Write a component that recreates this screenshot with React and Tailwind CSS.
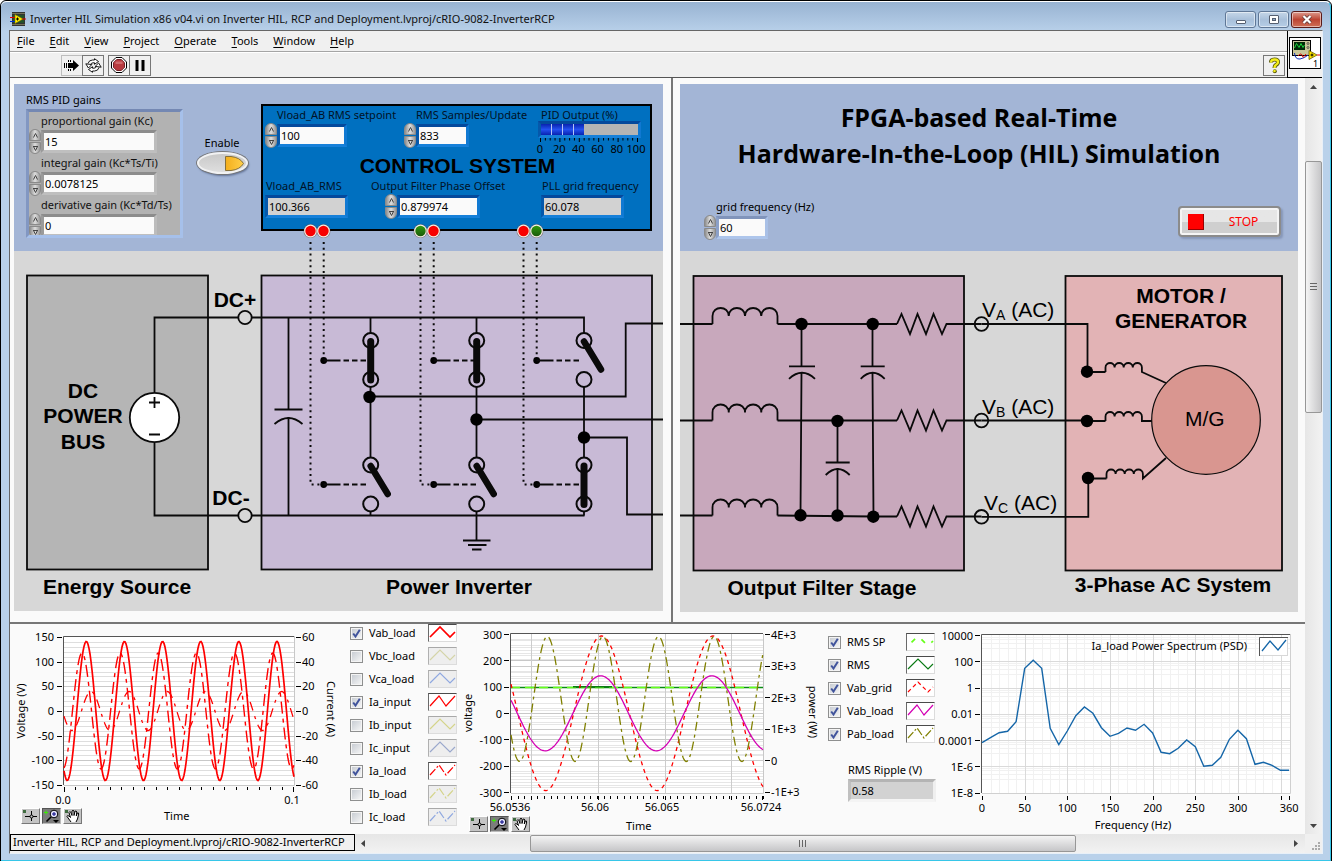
import React from "react";

const UI = "font-['Noto_Sans','Open_Sans','Segoe_UI',sans-serif]";
const ARIAL = "Liberation Sans, Arial, sans-serif";
const RED = "#ff0000";

/* ---------- small helpers ---------- */

const wave = (x0, x1, mid, amp, peak, period) => {
  const pts = [];
  for (let x = x0; x <= x1; x += 1) {
    const y = mid - amp * Math.cos((2 * Math.PI * (x - peak)) / period);
    pts.push(`${x},${y.toFixed(1)}`);
  }
  return pts.join(" ");
};

const steps = (from, to, step) => {
  const out = [];
  for (let v = from; v <= to + 0.01; v += step) out.push(v);
  return out;
};

/* ---------- controls ---------- */

const BEVEL = {
  gray: "border-t-[#8c8c8c] border-l-[#9a9a9a] border-r-[#bcbcbc] border-b-[#bfbfbf]",
  blue: "border-t-[#04499c] border-l-[#0558ab] border-r-[#1079d2] border-b-[#1680d9]",
  sky: "border-t-[#8094bb] border-l-[#8ba0c8] border-r-[#a9c0e6] border-b-[#adc5eb]",
  plain: "border-t-[#b4b4b4] border-l-[#c0c0c0] border-r-[#efefef] border-b-[#f4f4f4]",
};

function Spinner({ name }) {
  const half =
    "flex h-3 w-3 items-center justify-center border border-[#8a8a8a] bg-gradient-to-r from-[#8f8f8f] via-[#dedede] to-[#999999]";
  return (
    <span className="flex flex-col gap-px">
      <button type="button" aria-label={`Increase ${name}`} className={`${half} rounded-t-[6px]`}>
        <svg width="5" height="5" viewBox="0 0 5 5">
          <path d="M0.5 4.5 L2.5 0.5 L4.5 4.5" fill="none" stroke="#444" />
        </svg>
      </button>
      <button type="button" aria-label={`Decrease ${name}`} className={`${half} rounded-b-[6px]`}>
        <svg width="5" height="5" viewBox="0 0 5 5">
          <path d="M0 0.5 H5 M0.5 0.5 L2.5 4.5 L4.5 0.5" fill="none" stroke="#444" />
        </svg>
      </button>
    </span>
  );
}

function Numeric({ id, label, value, width, bevel, spinner = true, readOnly = false, indent = "", labelIndent = "" }) {
  return (
    <div className="flex flex-col">
      <label htmlFor={id} className={`h-[18px] whitespace-nowrap leading-[18px] ${labelIndent}`}>
        {label}
      </label>
      <div className={`flex h-[23px] items-center ${indent}`}>
        {spinner && <Spinner name={label} />}
        <input
          id={id}
          type="text"
          defaultValue={value}
          readOnly={readOnly}
          className={`h-[23px] border-[3px] px-px text-[11px] text-black outline-none ${width} ${BEVEL[bevel]} ${
            readOnly ? "bg-[#d2d2d2]" : "bg-[#fafafa]"
          }`}
        />
      </div>
    </div>
  );
}

function Check({ id, checked }) {
  return (
    <span className="relative flex size-[13px]">
      <input
        id={id}
        type="checkbox"
        defaultChecked={checked}
        className="peer size-[13px] appearance-none border border-[#8e8f8f] bg-gradient-to-br from-[#c4c9d0] to-[#f8f8f8] shadow-[inset_0_0_0_1px_#f4f4f4]"
      />
      <svg viewBox="0 0 13 13" className="pointer-events-none absolute inset-0 hidden peer-checked:block">
        <path d="M3.2 6.5 L5.5 9.6 L9.8 2.8" fill="none" stroke="#41549c" strokeWidth="2" />
      </svg>
    </span>
  );
}

const SHAPES = {
  peak: "2,13 12,3 22,13 27,8",
  zig: "2,13 11,3 18,13 27,3",
};

function Sample({ color, shape, dash, off, strong }) {
  return (
    <svg
      width="29"
      height="18"
      viewBox="1 1 27 16"
      className={`border border-r-[#dcdcdc] border-b-[#dcdcdc] ${
        off ? "border-t-[#a8a8a8] border-l-[#b0b0b0] bg-[#eeeeee]" : "border-t-[#4a4a4a] border-l-[#6a6a6a] bg-white"
      }`}
    >
      <polyline
        points={SHAPES[shape]}
        fill="none"
        stroke={color}
        strokeWidth={strong ? 1.7 : 1.2}
        strokeDasharray={dash}
      />
    </svg>
  );
}

function Legend({ prefix, items }) {
  return (
    <ul className="flex flex-col gap-[5px]">
      {items.map((it) => (
        <li key={it.name} className="flex h-[18px] items-center">
          <Check id={`${prefix}-${it.name}`} checked={!it.off} />
          <label htmlFor={`${prefix}-${it.name}`} className="w-[65px] pl-1.5 whitespace-nowrap">
            {it.name}
          </label>
          <Sample {...it} />
        </li>
      ))}
    </ul>
  );
}

function Palette() {
  const btn = "flex h-4 w-[19px] items-center justify-center border border-t-white border-l-white border-r-[#777] border-b-[#777] bg-[#c4c4c4]";
  return (
    <div className="flex gap-0.5">
      <button type="button" aria-label="Cursor" className={btn}>
        <svg width="17" height="14" viewBox="0 0 17 14">
          <rect x="1" y="1" width="3" height="3" fill="#3f6b3f" />
          <path d="M9.5 2 V12 M3 7.5 H15" stroke="#000" fill="none" />
          <circle cx="9.5" cy="7.5" r="1.5" fill="#ccc" stroke="#000" />
        </svg>
      </button>
      <button type="button" aria-label="Zoom" className="flex h-4 w-[19px] items-center justify-center border border-t-[#555] border-l-[#555] border-r-[#bbb] border-b-[#bbb] bg-[#7c7c7c]">
        <svg width="17" height="14" viewBox="0 0 17 14">
          <path d="M1 3.5 H5 M3 1.5 V5.5" stroke="#39f000" />
          <circle cx="11" cy="5" r="3.8" fill="#e8e8ff" stroke="#000" />
          <path d="M9 5 H13 M11 3 V7" stroke="#000080" />
          <path d="M8 8 L3.5 12.5" stroke="#000" strokeWidth="1.6" />
          <path d="M10 11 H16 L13 14 Z" fill="#000" />
        </svg>
      </button>
      <button type="button" aria-label="Pan" className={btn}>
        <svg width="17" height="14" viewBox="0 0 17 14">
          <rect x="1" y="1" width="3" height="3" fill="#3f6b3f" />
          <path
            d="M7 13 L3 7.5 Q3 6 5 7 L6.5 8.5 L5 3.5 Q5.5 2 6.8 3.3 L8 6.5 V2 Q9 0.5 10 2 V6.5 L11 2.3 Q12.2 1.3 12.8 3 L12.3 7 L13.3 4 Q14.6 3.3 14.7 5 L13.5 10 L12 13"
            fill="#fff"
            stroke="#000"
          />
        </svg>
      </button>
    </div>
  );
}

/* ---------- window chrome ---------- */

function TitleBar() {
  const btn = "flex h-[17px] w-[31px] items-center justify-center rounded-[3px] border shadow-[inset_0_0_0_1px_rgba(255,255,255,0.5)]";
  return (
    <header className="flex h-7 items-center pt-1.5 pr-px pl-px">
      <svg width="16" height="14" viewBox="0 0 16 14">
        <rect x="2" y="0" width="13" height="14" fill="#333" />
        <path d="M2.5 1.5 H15 M2.5 12.5 H15" stroke="#b4b478" strokeDasharray="1 1" />
        <rect x="3" y="3" width="11" height="8" fill="#22502a" />
        <path d="M5 2.5 L13 7 L5 11.5 Z" fill="#ffee00" stroke="#8a7a00" strokeWidth="0.6" />
        <path d="M6 7 H9 M7.5 5.5 V8.5" stroke="#000" />
        <path d="M0 5.5 H5" stroke="#e00000" />
        <path d="M0 9.5 H5" stroke="#0030d0" />
        <path d="M12 7 H16" stroke="#e00000" />
      </svg>
      <h1 className="flex-1 truncate pl-1 text-[#111]">
        Inverter HIL Simulation x86 v04.vi on Inverter HIL, RCP and Deployment.lvproj/cRIO-9082-InverterRCP
      </h1>
      <div className="flex gap-0.5">
        <button type="button" aria-label="Minimize" className={`${btn} border-[#5f7796] bg-gradient-to-b from-[#c5d6e8] via-[#a9c0da] to-[#b5cde6]`}>
          <svg width="12" height="11" viewBox="0 0 12 11">
            <rect x="1.5" y="6.5" width="9" height="3" rx="0.5" fill="#fff" stroke="#555f70" />
          </svg>
        </button>
        <button type="button" aria-label="Restore" className={`${btn} border-[#5f7796] bg-gradient-to-b from-[#c5d6e8] via-[#a9c0da] to-[#b5cde6]`}>
          <svg width="12" height="11" viewBox="0 0 12 11">
            <rect x="1.5" y="1.5" width="9" height="8" rx="0.5" fill="#fff" stroke="#555f70" />
            <rect x="4.5" y="4.5" width="3" height="2" fill="#8fa9c8" stroke="#555f70" />
          </svg>
        </button>
        <button type="button" aria-label="Close" className={`${btn} border-[#5a1a18] bg-gradient-to-b from-[#dc9a8e] via-[#bc4433] to-[#cf6f57]`}>
          <svg width="12" height="11" viewBox="0 0 12 11">
            <path d="M2.5 2 L9.5 9 M9.5 2 L2.5 9" stroke="#5b3a3a" strokeWidth="3.8" />
            <path d="M2.5 2 L9.5 9 M9.5 2 L2.5 9" stroke="#fff" strokeWidth="2.2" />
          </svg>
        </button>
      </div>
    </header>
  );
}

function MenuBar() {
  return (
    <nav className="flex h-[21px] items-center gap-[15px] border-b border-[#a5a5a5] bg-[#f0f0f0] pl-[7px]">
      {["File", "Edit", "View", "Project", "Operate", "Tools", "Window", "Help"].map((m) => (
        <button key={m} type="button" className="leading-4">
          <span className="underline underline-offset-2">{m[0]}</span>
          {m.slice(1)}
        </button>
      ))}
    </nav>
  );
}

function ToolBar() {
  const btn = "flex h-[21px] w-[22px] items-center justify-center border bg-[#f0f0f0]";
  return (
    <div className="flex h-[26px] items-center border-t border-t-white border-b border-b-[#555] bg-[#f0f0f0] pr-0.5 pl-[51px]">
      <button type="button" aria-label="Run" className={`${btn} border-[#bdbdbd]`}>
        <svg width="16" height="15" viewBox="0 0 16 15">
          <path d="M0.5 5 V10 M2.5 5 V10" stroke="#000" />
          <path d="M4 5 H9 V2 L15 7.5 L9 13 V10 H4 Z" fill="#000" />
          <path d="M4.5 2 V4 M6.5 2 V4 M4.5 11 V13 M6.5 11 V13" stroke="#000" />
        </svg>
      </button>
      <button type="button" aria-label="Run continuously" className={`${btn} -ml-px border-[#777]`}>
        <svg width="17" height="15" viewBox="0 0 17 15">
          <g fill="#fff" stroke="#000" strokeWidth="0.9">
            <path d="M3 5.5 Q4 2 7.5 2 H9.5 V0.7 L13.5 3.5 L9.5 6.3 V4.8 H8 Q6 4.8 5.5 7" />
            <path d="M14 9.5 Q13 13 9.5 13 H7.5 V14.3 L3.5 11.5 L7.5 8.7 V10.2 H9 Q11 10.2 11.5 8" />
            <path d="M0.8 5.8 L6.8 6.6 L3.4 10 Z" />
            <path d="M16.2 9.2 L10.2 8.4 L13.6 5 Z" />
          </g>
        </svg>
      </button>
      <button type="button" aria-label="Abort execution" className={`${btn} ml-1 border-[#777]`}>
        <svg width="16" height="16" viewBox="0 0 16 16">
          <path d="M5 0.5 H11 L15.5 5 V11 L11 15.5 H5 L0.5 11 V5 Z" fill="#fff" stroke="#000" />
          <path d="M5.7 2.5 H10.3 L13.5 5.7 V10.3 L10.3 13.5 H5.7 L2.5 10.3 V5.7 Z" fill="#b83a3f" stroke="#74252a" />
          <path d="M4.5 4.5 H11.5 V7 H4.5 Z" fill="#cf6a6c" />
        </svg>
      </button>
      <button type="button" aria-label="Pause" className={`${btn} -ml-px border-[#777]`}>
        <svg width="10" height="11" viewBox="0 0 10 11">
          <path d="M0.5 0 H3.5 V11 H0.5 Z M6.5 0 H9.5 V11 H6.5 Z" fill="#000" />
        </svg>
      </button>
      <button type="button" aria-label="Context help" className={`${btn} ml-auto border-[#777]`}>
        <svg width="13" height="17" viewBox="0 0 13 17">
          <path d="M3 5.5 Q3 2.5 6.5 2.5 Q10 2.5 10 5 Q10 7 7.8 8 Q6.5 8.8 6.5 11" fill="none" stroke="#55560a" strokeWidth="4" />
          <circle cx="6.8" cy="14.2" r="2" fill="#55560a" />
          <path d="M3 5.5 Q3 2.5 6.5 2.5 Q10 2.5 10 5 Q10 7 7.8 8 Q6.5 8.8 6.5 11" fill="none" stroke="#f4ee1a" strokeWidth="2.4" />
          <circle cx="6.5" cy="14" r="1.3" fill="#f4ee1a" />
        </svg>
      </button>
    </div>
  );
}

function ViIcon() {
  return (
    <div className="w-[35px] border-b border-l border-black bg-[#f0f0f0] pt-1.5 pl-px">
      <svg width="32" height="32" viewBox="0 0 32 32">
        <rect x="0.5" y="0.5" width="31" height="31" fill="#fff" stroke="#000" />
        <rect x="3.5" y="3.5" width="18" height="15" fill="#c9c69a" stroke="#000" />
        <rect x="5" y="5" width="11" height="8" fill="#022a08" />
        <path d="M5.5 11 L7.5 6.5 L10 10.5 L12 6.5 L14 10.5 L15.5 8" fill="none" stroke="#1bd13a" />
        <circle cx="19" cy="6.5" r="1" fill="none" stroke="#333" strokeWidth="0.7" />
        <circle cx="19" cy="10.5" r="1" fill="none" stroke="#333" strokeWidth="0.7" />
        <path d="M5.5 16 Q6 22.5 11 22 Q16 21 19 18" fill="none" stroke="#1030c0" />
        <path d="M9 19 Q12 15 13.5 19 Q14 22 17 17" fill="none" stroke="#e00000" />
        <path d="M20 13.5 L28 18 L20 22.5 Z" fill="#ffe800" stroke="#6a5a00" strokeWidth="0.8" />
        <path d="M21.5 18 H24.5 M23 16.5 V19.5" stroke="#000" />
        <path d="M28 18 H31" stroke="#e00000" />
        <text x="24" y="30" fontSize="9" fill="#000">1</text>
      </svg>
    </div>
  );
}

/* ---------- schematic pieces ---------- */

const INK = "#0a0a0a";
const Node = ({ x, y, r = 6.2 }) => <circle cx={x} cy={y} r={r} fill="#000" stroke="none" />;
const Terminal = ({ x, y, fill = "#d7d7d7" }) => <circle cx={x} cy={y} r="6.7" fill={fill} strokeWidth="1.8" />;

const Cap = ({ x, y, half, gap = 6 }) => (
  <path d={`M${x - half} ${y} H${x + half} M${x - half} ${y + gap + 6.5} Q${x} ${y + gap - 5.5} ${x + half} ${y + gap + 6.5}`} />
);

const coil = (x, y, w, h, lead) => {
  let d = `M${x} ${y} v${-lead}`;
  for (let i = 0; i < 4; i += 1) d += ` c0 ${-h * 1.33} ${w} ${-h * 1.33} ${w} 0`;
  return `${d} v${lead}`;
};

const zigzag = (x, y) =>
  `M${x} ${y} l4.5 -10 l8.5 20 l7.5 -20 l8.5 20 l7.5 -20 l8.5 20 l4.5 -10`;

function Switch({ x, y, closed }) {
  return (
    <g>
      <circle cx={x} cy={y} r="7.5" fill="none" strokeWidth="2" />
      <circle cx={x} cy={y + 39} r="7.5" fill="none" strokeWidth="2" />
      {closed ? (
        <path d={`M${x} ${y + 1} V${y + 39.5}`} strokeWidth="7" strokeLinecap="round" />
      ) : (
        <path d={`M${x} ${y + 1} L${x + 17} ${y + 29}`} strokeWidth="6.5" strokeLinecap="round" />
      )}
    </g>
  );
}

function Led({ x, on }) {
  return (
    <g stroke="none">
      <circle cx={x} cy="231" r="7" fill="#6f4a3a" opacity="0.55" />
      <circle cx={x} cy="231" r="6.4" fill="#f4efe6" />
      <circle cx={x} cy="231" r="5.2" fill={on ? "url(#ledGreen)" : "#f80000"} />
    </g>
  );
}

function GateDrive({ x, onA, onB }) {
  return (
    <g>
      <g strokeDasharray="2 3.8" strokeWidth="2">
        <path d={`M${x} 242 V484.5 H${x + 12}`} />
        <path d={`M${x + 13.2} 242 V358`} />
      </g>
      <Node x={x + 13.2} y={360.5} r={3.4} />
      <Node x={x + 13.2} y={484.5} r={3.4} />
      <path d={`M${x + 13} 360.5 H${x + 30} M${x + 13} 484.5 H${x + 30}`} />
      <path d={`M${x + 33} 360.5 h24 M${x + 33} 484.5 h24`} strokeDasharray="5.5 3" strokeWidth="1.8" />
      <Led x={x} on={onA} />
      <Led x={x + 13} on={onB} />
    </g>
  );
}

function InverterSchematic() {
  return (
    <svg width="649" height="360" viewBox="14 251 649 360" className="relative block overflow-visible" fill="none" stroke={INK} strokeWidth="1.8">
      <defs>
        <linearGradient id="ledGreen" x1="0" y1="0" x2="0" y2="1">
          <stop offset="0" stopColor="#2f9a10" />
          <stop offset="1" stopColor="#1c5a0a" />
        </linearGradient>
      </defs>
      <rect x="27" y="275.5" width="181" height="294" fill="#b5b5b5" />
      <rect x="261.5" y="275.5" width="390.5" height="294" fill="#c8bad6" />

      <path d="M154.5 392 V317.5 H584 V334 M154.5 443 V515.5 H584.5" />
      <circle cx="154.5" cy="417.5" r="24.7" fill="#fff" strokeWidth="1.8" />
      <path d="M149 402.5 H160 M154.5 397 V408 M149 434.5 H160" />
      <Terminal x={245} y={317.5} />
      <Terminal x={245} y={515.5} />

      <path d="M288.5 317.5 V409.5 M288.5 417 V515.5" />
      <Cap x={288.5} y={409.5} half={14} gap={8} />

      <path d="M370.5 317.5 V333 M370.5 387 V457 M370.5 511 V515.5" />
      <path d="M476.5 317.5 V333 M476.5 387 V457 M476.5 511 V540.5" />
      <path d="M584 387 V457 M584 511 V515.5" />
      <path d="M463 540.5 H490.5 M468 545 H486.5 M472 549.5 H481.5" />

      <path d="M370 396.5 H625.7 V323.5 H663 M476.5 419.5 H663 M584 437.5 H627 V514.5 H663" />
      <Node x={369.5} y={397} />
      <Node x={476.5} y={419.5} />
      <Node x={584} y={437.5} />

      <Switch x={370.7} y={340.5} closed />
      <Switch x={476.7} y={340.5} closed />
      <Switch x={584} y={340.5} />
      <Switch x={370.7} y={465} />
      <Switch x={476.7} y={465} />
      <Switch x={584} y={465} closed />

      <GateDrive x={310.5} />
      <GateDrive x={420.5} onA />
      <GateDrive x={523.5} onB />

      <g fontFamily={ARIAL} fontWeight="700" fontSize="21" fill="#000" stroke="none" textAnchor="middle">
        <text x="83" y="398">DC</text>
        <text x="83" y="423">POWER</text>
        <text x="83" y="449">BUS</text>
        <text x="235" y="307">DC+</text>
        <text x="231" y="505">DC-</text>
        <text x="117" y="594">Energy Source</text>
        <text x="459" y="594">Power Inverter</text>
      </g>
    </svg>
  );
}

function FilterSchematic() {
  return (
    <svg width="618" height="361" viewBox="680 251 618 361" className="block" fill="none" stroke={INK} strokeWidth="1.8">
      <rect x="693.5" y="276" width="270.5" height="294.5" fill="#c8a8bc" />
      <rect x="1065.5" y="276" width="216.5" height="294.5" fill="#e2b3b5" />

      {[324, 420.5, 515.5].map((y) => (
        <path key={y} d={`M680 ${y} H712.5 ${coil(712.5, y, 16.25, 8, 8)}`} />
      ))}
      <path d="M777.5 324 H897 M777.5 420.5 H897 M777.5 515.5 L873 516.5 H897" />
      <path d={`${zigzag(897, 324)} H981.5 ${zigzag(897, 420.5)} H981.5 ${zigzag(897, 516.5)} H981.5`} />

      <path d="M801.5 324 V366 M801.5 372 L800.5 515 M872.5 324 V366 M872.5 372 L873.5 516 M837.5 421 V462.5 M837.5 468 V515" />
      <Cap x={802} y={366.3} half={13} />
      <Cap x={872.7} y={366.3} half={12} />
      <Cap x={837.7} y={462.5} half={12} />
      <Node x={801.5} y={324} />
      <Node x={872.7} y={324} />
      <Node x={837.5} y={421} />
      <Node x={800.5} y={515.3} />
      <Node x={837.5} y={515.5} />
      <Node x={873.3} y={516.7} />

      {[324, 420.5, 516.8].map((y) => (
        <circle key={y} cx="981.5" cy={y} r="6.8" strokeWidth="1.8" />
      ))}
      <path d="M981.5 324 H1087.5 V371 M981.5 420.5 H1087 M981.5 516.8 H1088.3 V478" />
      <path d={`M1087 372 H1105.5 ${coil(1105.5, 372, 9.1, 4.5, 4.5)} L1166 383`} />
      <path d={`M1087 421 H1105.5 ${coil(1105.5, 421, 9.1, 4.5, 4.5)} H1152`} />
      <path d={`M1088 478.5 H1106.5 ${coil(1106.5, 478.5, 9.1, 4.5, 4.5)} L1166 458`} />
      <Node x={1087} y={371.7} />
      <Node x={1087} y={421} />
      <Node x={1088} y={478} />
      <circle cx="1206" cy="420" r="54.3" fill="#d99690" strokeWidth="1.2" />

      <g fontFamily={ARIAL} fontWeight="700" fontSize="21" fill="#000" stroke="none" textAnchor="middle">
        <text x="1181" y="303">MOTOR /</text>
        <text x="1181" y="328">GENERATOR</text>
        <text x="822" y="595">Output Filter Stage</text>
        <text x="1173" y="592">3-Phase AC System</text>
      </g>
      <g fontFamily={ARIAL} fontSize="21" fill="#000" stroke="none">
        <text x="1185" y="426">M/G</text>
        <text x="982" y="317">V<tspan fontSize="14" dy="3">A</tspan><tspan dy="-3"> (AC)</tspan></text>
        <text x="982" y="414">V<tspan fontSize="14" dy="3">B</tspan><tspan dy="-3"> (AC)</tspan></text>
        <text x="984" y="510">V<tspan fontSize="14" dy="3">C</tspan><tspan dy="-3"> (AC)</tspan></text>
      </g>
    </svg>
  );
}

/* ---------- front panel sections ---------- */

function PidGains() {
  return (
    <fieldset className="w-[157px]">
      <legend className="h-[17px] leading-4">RMS PID gains</legend>
      <div className="h-[129px] overflow-hidden border-[3px] border-t-[#7488b3] border-l-[#8297c2] border-r-[#a6c0ea] border-b-[#a6c0ea] bg-[#b2b2b2] text-[#111]">
        {[
          ["kc", "proportional gain (Kc)", "15"],
          ["ti", "integral gain (Kc*Ts/Ti)", "0.0078125"],
          ["td", "derivative gain (Kc*Td/Ts)", "0"],
        ].map(([id, label, value]) => (
          <div key={id} className="h-[42px]">
            <Numeric id={id} label={label} value={value} width="w-[116px]" bevel="gray" labelIndent="pl-3" />
          </div>
        ))}
      </div>
    </fieldset>
  );
}

function PidMeter() {
  return (
    <div className="flex flex-col">
      <span id="pid-out" className="h-[18px] pl-[3px] leading-[18px] whitespace-nowrap">PID Output (%)</span>
      <div
        role="meter"
        aria-labelledby="pid-out"
        aria-valuenow={44}
        aria-valuemin={0}
        aria-valuemax={100}
        className={`-mt-[3px] flex h-[17px] w-[103px] border-[3px] bg-[#b4b4b4] ${BEVEL.blue}`}
      >
        <div className="flex w-[44%] gap-px bg-[#b4c4f4]">
          {[0, 1, 2, 3].map((k) => (
            <div key={k} className="flex-1 bg-gradient-to-b from-[#0a22b0] via-[#2450f0] to-[#0a22b0]" />
          ))}
        </div>
      </div>
      <svg width="103" height="17" viewBox="538 138 103 17" className="overflow-visible">
        {steps(0, 20, 1).map((k) => (
          <path key={k} d={`M${540.5 + k * 4.85} 138 v${k % 4 === 0 ? 4 : 2.5}`} stroke="#000" />
        ))}
        <g fontSize="11" textAnchor="middle" fill="#000">
          {[0, 20, 40, 60, 80, 100].map((v) => (
            <text key={v} x={540 + v * 0.96} y="153">{v}</text>
          ))}
        </g>
      </svg>
    </div>
  );
}

function ControlSystem() {
  return (
    <section className="mt-5 h-[127px] w-[391px] border-2 border-black bg-[#0070c0] pl-0.5 text-[#001226]">
      <div className="flex h-[49px]">
        <div className="w-[139px]">
          <Numeric id="sp" label="Vload_AB RMS setpoint" value="100" width="w-[70px]" bevel="blue" labelIndent="pl-3" />
        </div>
        <div className="w-[134px]">
          <Numeric id="spu" label="RMS Samples/Update" value="833" width="w-[53px]" bevel="blue" labelIndent="pl-3" />
        </div>
        <PidMeter />
      </div>
      <h2 className="h-[22px] text-center font-['Liberation_Sans',Arial,sans-serif] text-[21px] leading-[22px] font-bold text-black">
        CONTROL SYSTEM
      </h2>
      <div className="flex">
        <div className="w-[106px]">
          <Numeric id="vrms" label="Vload_AB_RMS" value="100.366" width="w-[83px]" bevel="blue" spinner={false} readOnly labelIndent="pl-px" />
        </div>
        <div className="w-[170px]">
          <Numeric id="off" label="Output Filter Phase Offset" value="0.879974" width="w-[83px]" bevel="blue" indent="pl-[14px]" />
        </div>
        <Numeric id="pll" label="PLL grid frequency" value="60.078" width="w-[83px]" bevel="blue" spinner={false} readOnly labelIndent="pl-px" />
      </div>
    </section>
  );
}

function InverterPane() {
  return (
    <div className="min-w-0 flex-[649] bg-[#fafafa] pt-1.5 pr-2 pb-[11px] pl-1">
      <div className="flex h-[167px] bg-[#a3b5d6] pt-2 pl-3">
        <PidGains />
        <div className="mt-[42px] mr-3 ml-3 flex w-[54px] flex-col items-center">
          <span id="enable-label" className="leading-[18px]">Enable</span>
          <button
            type="button"
            aria-labelledby="enable-label"
            aria-pressed="true"
            className="flex h-[22px] w-[51px] items-center justify-end rounded-[50%] border-2 border-[#f2f2f2] bg-gradient-to-b from-[#c9c9c9] to-[#dedede] pr-0.5 shadow-[0_0_0_1px_#777,1px_2px_2px_#66779a]"
          >
            <svg width="19" height="15" viewBox="0 0 19 15">
              <defs>
                <linearGradient id="lamp" x1="0" y1="0" x2="1" y2="0">
                  <stop offset="0" stopColor="#f3ae1c" />
                  <stop offset="1" stopColor="#ffcf4a" />
                </linearGradient>
              </defs>
              <path d="M0.5 0.5 H6 Q15 1.5 18.5 7.5 Q15 13.5 6 14.5 H0.5 Z" fill="url(#lamp)" stroke="#86703a" />
            </svg>
          </button>
        </div>
        <div className="-mt-2">
          <ControlSystem />
        </div>
      </div>
      <div className="bg-[#d7d7d7]">
        <InverterSchematic />
      </div>
    </div>
  );
}

function FilterPane() {
  return (
    <div className="min-w-0 flex-[618] bg-[#fafafa] pt-1.5 pr-[7px] pb-2 pl-[7px]">
      <div className="flex h-[167px] flex-col bg-[#a3b5d6] pt-[15px]">
        <h2 className="pr-5 text-center font-['Open_Sans',sans-serif] text-[25px] leading-9 font-bold text-black">
          FPGA-based Real-Time
          <br />
          Hardware-In-the-Loop (HIL) Simulation
        </h2>
        <div className="mt-[27px] flex justify-between pr-[17px] pl-6">
          <Numeric id="gf" label="grid frequency (Hz)" value="60" width="w-[52px]" bevel="sky" labelIndent="pl-3" />
          <button
            type="button"
            className="mt-2 flex h-[31px] w-[103px] items-center rounded-[4px] border-2 border-[#8b8b8b] bg-gradient-to-b from-[#e6e6e6] from-50% to-[#cfcfcf] to-50% pl-2 text-[12px] text-[#ff0000] shadow-[inset_0_0_0_2px_#f5f5f5,2px_2px_2px_#8797b8]"
          >
            <span className="size-4 border-r border-b border-[#900] bg-[#ff0000]" />
            <span className="flex-1 pl-1">STOP</span>
          </button>
        </div>
      </div>
      <div className="bg-[#d7d7d7]">
        <FilterSchematic />
      </div>
    </div>
  );
}

/* ---------- graphs ---------- */

function ScopeGraph() {
  const major = steps(0, 6, 1).map((k) => 637 + k * 24.67);
  return (
    <figure className="flex w-[335px] flex-col">
      <svg width="335" height="183" viewBox="10 624 335 183" fill="none">
        <rect x="64" y="636" width="230" height="149" fill="#fff" />
        {steps(1, 29, 1).map((k) => (
          <path key={k} d={`M64 ${Math.round(637 + k * 4.93) + 0.5} H294`} stroke={k % 5 === 0 ? "#c8c8c8" : "#dedede"} />
        ))}
        <path d="M294.5 636 V785.5 H64" stroke="#c8c8c8" />
        <path d="M63.5 785 V636.5 H294" stroke="#555" />
        <polyline points={wave(64, 294, 711, 58, 82, 38.13)} stroke={RED} strokeWidth="1.4" strokeDasharray="12 5 4 5" />
        <polyline points={wave(64, 294, 711, 19.5, 91, 38.13)} stroke={RED} strokeWidth="1.3" strokeDasharray="9 6 3 6" />
        <polyline points={wave(64, 294, 711, 69.5, 86.3, 38.13)} stroke={RED} strokeWidth="1.7" />
        {major.map((y) => (
          <path key={y} d={`M57 ${Math.round(y) + 0.5} h5 M296 ${Math.round(y) + 0.5} h5`} stroke="#000" />
        ))}
        {steps(0, 20, 1).map((k) => (
          <path key={k} d={`M${Math.round(64 + k * 11.45) + 0.5} 787 v${k % 20 === 0 ? 5 : 3}`} stroke="#000" />
        ))}
        <g fontSize="11" fill="#000">
          {["150", "100", "50", "0", "-50", "-100", "-150"].map((t, k) => (
            <text key={t} x="54" y={641 + k * 24.67} textAnchor="end">{t}</text>
          ))}
          {["60", "40", "20", "0", "-20", "-40", "-60"].map((t, k) => (
            <text key={t} x="302" y={641 + k * 24.67}>{t}</text>
          ))}
          <text x="63" y="804" textAnchor="middle">0.0</text>
          <text x="292" y="804" textAnchor="middle">0.1</text>
          <text transform="translate(25 711) rotate(-90)" textAnchor="middle">Voltage (V)</text>
          <text transform="translate(327 709) rotate(90)" textAnchor="middle">Current (A)</text>
        </g>
      </svg>
      <figcaption className="flex items-center pt-px pl-[11px]">
        <Palette />
        <span className="pl-[82px]">Time</span>
      </figcaption>
    </figure>
  );
}

function PowerGraph() {
  return (
    <figure className="flex w-[365px] flex-col">
      <svg width="365" height="189" viewBox="460 624 365 189" fill="none">
        <rect x="511" y="634" width="252" height="159" fill="#fff" />
        {steps(1, 29, 1).map((k) => (
          <path key={`a${k}`} d={`M511 ${Math.round(634 + k * 5.27) + 0.5} H763`} stroke={k % 5 === 0 ? "#c8c8c8" : "#e6e6e6"} />
        ))}
        {steps(1, 24, 1).map((k) => (
          <path key={`b${k}`} d={`M511 ${Math.round(634 + k * 6.3) + 0.5} H763`} stroke={k % 5 === 0 ? "#cccccc" : "#e6e6e6"} />
        ))}
        {[531.5, 598.5, 665.5, 731.5].map((x) => (
          <path key={x} d={`M${x} 634 V793`} stroke="#cccccc" />
        ))}
        <path d="M763.5 634 V793.5 H511" stroke="#c8c8c8" />
        <path d="M510.5 793 V633.5 H763" stroke="#555" />
        <path d="M511 687.5 H763" stroke="#0a8a14" strokeWidth="1.4" />
        <path d="M511 687.5 H763" stroke="#66ff1a" strokeWidth="1.4" strokeDasharray="9 5" />
        <path d="M573 686.8 H612" stroke="#0a7a14" strokeWidth="1.6" />
        <polyline points={wave(511, 763, 713.3, 77.3, 601.5, 111.5)} stroke={RED} strokeWidth="1.3" strokeDasharray="4 4" />
        <polyline points={wave(511, 763, 699, 62.5, 547.3, 55.6)} stroke="#808000" strokeWidth="1.3" strokeDasharray="9 4 3 4" />
        <polyline points={wave(511, 763, 713.3, 37.5, 600.7, 111.2)} stroke="#d400b4" strokeWidth="1.3" />
        {steps(0, 6, 1).map((k) => (
          <path key={k} d={`M504 ${Math.round(634 + k * 26.35) + 0.5} h5`} stroke="#000" />
        ))}
        {steps(0, 5, 1).map((k) => (
          <path key={k} d={`M765 ${Math.round(634 + k * 31.5) + 0.5} h5`} stroke="#000" />
        ))}
        {steps(0, 38, 1).map((k) => (
          <path key={k} d={`M${Math.round(511 + k * 6.62) + 0.5} 796 v3`} stroke="#000" />
        ))}
        {[511.5, 531.5, 598.5, 665.5, 731.5, 762.5].map((x) => (
          <path key={x} d={`M${x} 796 v4`} stroke="#000" />
        ))}
        <g fontSize="11" fill="#000">
          {["300", "200", "100", "0", "-100", "-200", "-300"].map((t, k) => (
            <text key={t} x="502" y={638.5 + k * 26.35} textAnchor="end">{t}</text>
          ))}
          {["4E+3", "3E+3", "2E+3", "1E+3", "0", "-1E+3"].map((t, k) => (
            <text key={t} x="771" y={638.5 + k * 31.5}>{t}</text>
          ))}
          <text x="510" y="811" textAnchor="middle">56.0536</text>
          <text x="595" y="811" textAnchor="middle">56.06</text>
          <text x="662" y="811" textAnchor="middle">56.065</text>
          <text x="761" y="811" textAnchor="middle">56.0724</text>
          <text transform="translate(472 713) rotate(-90)" textAnchor="middle">voltage</text>
          <text transform="translate(809 712) rotate(90)" textAnchor="middle">power (W)</text>
        </g>
      </svg>
      <figcaption className="flex items-center pt-px pl-[9px]">
        <Palette />
        <span className="pl-24 pt-1 leading-4">Time</span>
      </figcaption>
    </figure>
  );
}

const PSD = [
  742.7, 737.7, 732.7, 731.3, 721.7, 668.3, 660.3, 668.3, 728.3, 744.7, 731, 715.7, 707, 713.3, 727.7, 736.3, 733.3, 728,
  730.3, 724.3, 733, 752.3, 753.7, 748.3, 740, 746.7, 766.3, 765.3, 757.3, 739.3, 730.3, 738.7, 764.3, 762.3, 765.3,
  770.3, 770.3,
];

function SpectrumGraph() {
  const px = (hz) => 982 + hz * 0.853;
  const fine = [];
  for (let k = 0; k < 6; k += 1) [2, 4, 8, 13].forEach((o) => fine.push(Math.round(635 + k * 26.25 + o) + 0.5));
  return (
    <figure className="flex w-[368px] flex-col">
      <svg width="368" height="208" viewBox="937 624 368 208" fill="none">
        <rect x="982" y="634" width="308" height="159" fill="#fff" />
        {fine.map((y) => (
          <path key={y} d={`M982 ${y} H1290`} stroke="#f1f1f1" />
        ))}
        {steps(1, 35, 1).map((k) => (
          <path key={k} d={`M${Math.round(px(k * 10)) + 0.5} 634 V793`} stroke={k % 5 === 0 ? "#dadada" : "#f1f1f1"} />
        ))}
        {steps(1, 5, 1).map((k) => (
          <path key={k} d={`M982 ${Math.round(635 + k * 26.25) + 0.5} H1290`} stroke="#dadada" />
        ))}
        <path d="M1290.5 634 V793.5 H982" stroke="#d0d0d0" />
        <path d="M981.5 793 V634.5 H1290" stroke="#555" />
        <polyline points={PSD.map((y, k) => `${px(k * 10).toFixed(1)},${y}`).join(" ")} stroke="#1566a8" strokeWidth="1.4" />
        {steps(0, 6, 1).map((k) => (
          <path key={k} d={`M975 ${Math.round(635 + k * 26.25) + 0.5} h5`} stroke="#000" />
        ))}
        {[0, 50, 100, 150, 200, 250, 300, 350, 360].map((v) => (
          <path key={v} d={`M${Math.round(px(v)) + 0.5} 796 v4`} stroke="#000" />
        ))}
        <rect x="1259.5" y="637.5" width="28" height="18" fill="#fff" stroke="#d8d8d8" />
        <path d="M1259.5 656 V637.5 H1288" stroke="#555" />
        <polyline points="1262,651 1270,641 1278,650 1286,640" stroke="#1566a8" strokeWidth="1.3" />
        <g fontSize="11" fill="#000">
          <text x="1247" y="650" textAnchor="end">Ia_load Power Spectrum (PSD)</text>
          {["10000", "100", "1", "0.01", "0.0001", "1E-6", "1E-8"].map((t, k) => (
            <text key={t} x="973" y={639.5 + k * 26.25} textAnchor="end">{t}</text>
          ))}
          {[0, 50, 100, 150, 200, 250, 300, 360].map((v) => (
            <text key={v} x={px(v)} y="812" textAnchor="middle">{v}</text>
          ))}
          <text x="1133" y="829" textAnchor="middle">Frequency (Hz)</text>
        </g>
      </svg>
    </figure>
  );
}

const OFF_YELLOW = "#d4d48a";
const OFF_BLUE = "#8fa8e0";

function Graphs() {
  return (
    <section className="flex flex-1 justify-between overflow-hidden border-t-2 border-[#777] bg-[#fafafa]">
      <ScopeGraph />
      <div className="w-[115px] pl-[5px]">
        <Legend
          prefix="scope"
          items={[
            { name: "Vab_load", color: RED, shape: "peak", strong: true },
            { name: "Vbc_load", color: "#d4d4a8", shape: "peak", off: true },
            { name: "Vca_load", color: OFF_BLUE, shape: "peak", off: true },
            { name: "Ia_input", color: RED, shape: "zig" },
            { name: "Ib_input", color: OFF_YELLOW, shape: "peak", off: true },
            { name: "Ic_input", color: "#9aa8cc", shape: "peak", off: true },
            { name: "Ia_load", color: RED, shape: "zig", dash: "8 2 2 2" },
            { name: "Ib_load", color: OFF_YELLOW, shape: "zig", off: true, dash: "8 2 2 2" },
            { name: "Ic_load", color: OFF_BLUE, shape: "zig", off: true, dash: "8 2 2 2" },
          ]}
        />
      </div>
      <PowerGraph />
      <div className="w-[112px] pt-[9px] pl-[3px]">
        <Legend
          prefix="power"
          items={[
            { name: "RMS SP", color: "#66ff1a", shape: "peak", dash: "0 5 5 4", strong: true },
            { name: "RMS", color: "#0a7a14", shape: "peak" },
            { name: "Vab_grid", color: RED, shape: "peak", dash: "4 3" },
            { name: "Vab_load", color: "#d400b4", shape: "zig" },
            { name: "Pab_load", color: "#808000", shape: "zig", dash: "8 2 2 2" },
          ]}
        />
        <div className="pt-[18px] pl-5">
          <Numeric id="ripple" label="RMS Ripple (V)" value="0.58" width="w-[88px]" bevel="plain" spinner={false} readOnly />
        </div>
      </div>
      <SpectrumGraph />
    </section>
  );
}

/* ---------- scroll bars ---------- */

function VerticalScroll() {
  return (
    <div className="flex w-[17px] flex-col bg-gradient-to-r from-[#e6e6e6] to-[#f2f2f2]">
      <div className="flex h-[18px] items-center justify-center">
        <svg width="7" height="4" viewBox="0 0 7 4"><path d="M0 4 L3.5 0 L7 4 Z" fill="#444" /></svg>
      </div>
      <div className="flex-[65]" />
      <div className="flex flex-[250] flex-col items-center justify-center gap-px rounded-[2px] border border-[#979797] bg-gradient-to-r from-[#f4f4f4] to-[#c6c6c8]">
        <svg width="7" height="8" viewBox="0 0 7 8">
          <path d="M0 0.5 H7 M0 3.5 H7 M0 6.5 H7" stroke="#666" />
        </svg>
      </div>
      <div className="flex-[405]" />
      <div className="flex h-4 items-center justify-center">
        <svg width="7" height="4" viewBox="0 0 7 4"><path d="M0 0 L3.5 4 L7 0 Z" fill="#444" /></svg>
      </div>
    </div>
  );
}

function StatusRow() {
  return (
    <footer className="flex h-[19px] bg-[#f0f0f0]">
      <div className="flex h-[17px] w-[345px] items-center overflow-hidden border border-black bg-[#f0f0f0] px-0.5 whitespace-nowrap">
        Inverter HIL, RCP and Deployment.lvproj/cRIO-9082-InverterRCP
      </div>
      <div className="flex flex-1 bg-gradient-to-b from-[#e6e6e6] to-[#f2f2f2]">
        <div className="flex w-4 items-center justify-center">
          <svg width="4" height="7" viewBox="0 0 4 7"><path d="M4 0 L0 3.5 L4 7 Z" fill="#444" /></svg>
        </div>
        <div className="flex-[160]" />
        <div className="my-px flex flex-[545] items-center justify-center rounded-[2px] border border-[#979797] bg-gradient-to-b from-[#f4f4f4] to-[#c6c6c8]">
          <svg width="8" height="7" viewBox="0 0 8 7">
            <path d="M0.5 0 V7 M3.5 0 V7 M6.5 0 V7" stroke="#666" />
          </svg>
        </div>
        <div className="flex-[212]" />
        <div className="flex w-[18px] items-center justify-center">
          <svg width="4" height="7" viewBox="0 0 4 7"><path d="M0 0 L4 3.5 L0 7 Z" fill="#444" /></svg>
        </div>
      </div>
      <div className="flex w-[17px] items-end justify-end p-0.5">
        <svg width="9" height="9" viewBox="0 0 9 9">
          <path d="M7 1 h2 M4 4 h2 M7 4 h2 M1 7 h2 M4 7 h2 M7 7 h2" stroke="#aaa" strokeWidth="2" />
        </svg>
      </div>
    </footer>
  );
}

/* ---------- page ---------- */

export default function App() {
  return (
    <main className={`flex min-h-screen flex-col rounded-t-md border border-black bg-[#b9d1ea] text-[11px] text-black ${UI}`}>
      <div className="flex flex-1 flex-col rounded-t-md border-t border-r border-b border-t-white border-r-[#37c6e8] border-b-[#37c6e8] bg-gradient-to-b from-[#98b3d2] to-[#b9d1ea] to-[30px] pr-[7px] pb-1.5 pl-2">
        <TitleBar />
        <div className="flex flex-1 flex-col border border-t-[#666] border-r-[#e8f0f8] border-b-[#e8f0f8] border-l-[#666]">
          <div className="flex">
            <div className="flex-1">
              <MenuBar />
              <ToolBar />
            </div>
            <ViIcon />
          </div>
          <div className="flex flex-1">
            <div className="flex min-w-0 flex-1 flex-col">
              <div className="flex">
                <InverterPane />
                <div className="w-0.5 bg-[#777]" />
                <FilterPane />
              </div>
              <Graphs />
            </div>
            <VerticalScroll />
          </div>
          <StatusRow />
        </div>
      </div>
    </main>
  );
}
